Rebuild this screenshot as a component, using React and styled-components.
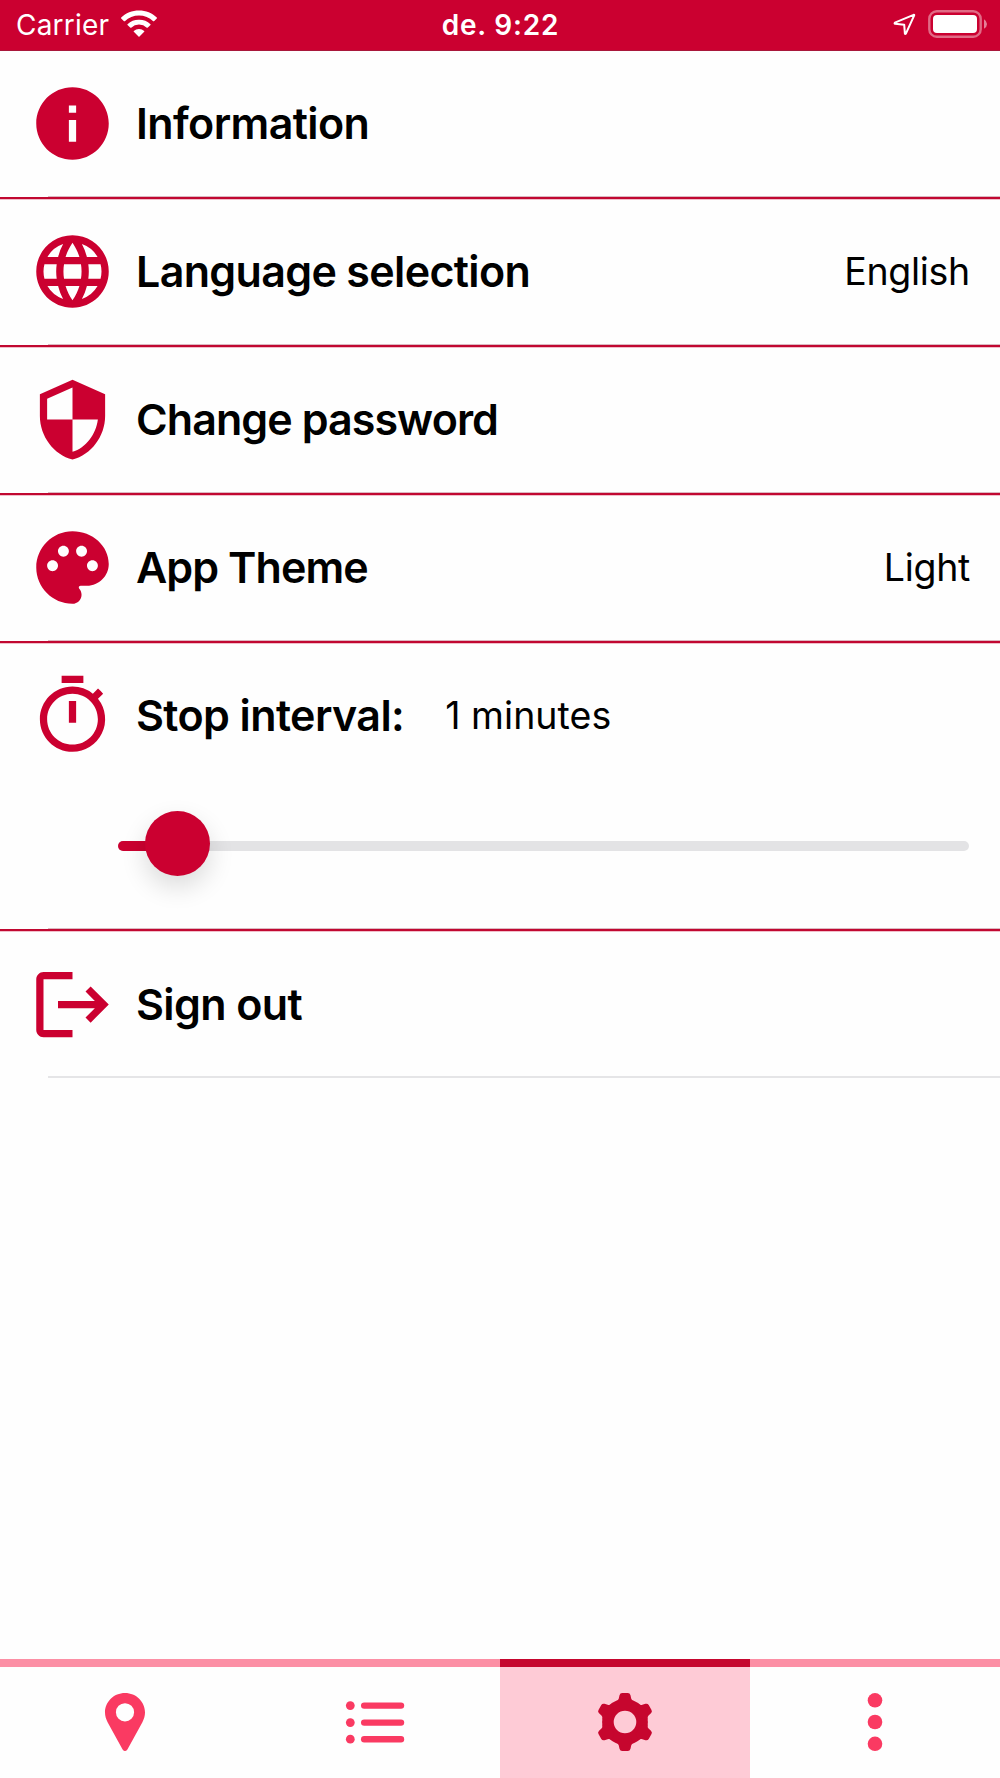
import styled, { createGlobalStyle } from "styled-components";
import { MdInfo, MdLanguage, MdSecurity } from "react-icons/md";

const RED = "#cb0030";

const GlobalStyle = createGlobalStyle`
  * {
    box-sizing: border-box;
  }

  body {
    margin: 0;
    background: #fefefe;
    color: #000;
    font-family: Inter, "Liberation Sans", sans-serif;
  }
`;

const Screen = styled.div`
  display: flex;
  flex-direction: column;
  height: 1778px;
`;

const StatusBar = styled.header`
  display: grid;
  grid-template-columns: 1fr auto 1fr;
  align-items: center;
  height: 51px;
  padding: 0 12px 2px 16px;
  background: ${RED};
  border-bottom: 1px solid #a8173b;
  color: #fff;
  font-size: 28px;
`;

const StatusGroup = styled.div`
  display: flex;
  align-items: center;
  justify-content: ${({ $end }) => ($end ? "flex-end" : "flex-start")};
  gap: 12px;
`;

const Carrier = styled.span`
  padding-top: 2px;
  letter-spacing: 0.2px;
`;

const Clock = styled.span`
  padding: 2px 3px 0 0;
  font-weight: 600;
  letter-spacing: 0.8px;
`;

const List = styled.ul`
  flex: 1;
  margin: 0;
  padding: 0;
  list-style: none;
`;

const Item = styled.li`
  position: relative;
  height: ${({ $height }) => $height}px;
  border-bottom: ${({ $last }) => ($last ? "none" : "2px solid #c10831")};
  box-shadow: ${({ $last }) =>
    $last ? "none" : "0 1px 0 rgba(203, 0, 48, 0.25)"};

  /* native inset separator */
  &::after {
    content: "";
    position: absolute;
    right: 0;
    bottom: 0;
    left: 48px;
    height: ${({ $last }) => ($last ? 2 : 1)}px;
    background: ${({ $last }) => ($last ? "#e5e5e7" : "#dcb9c1")};
  }
`;

const Row = styled.div`
  display: flex;
  align-items: center;
  height: ${({ $height }) => $height ?? 146}px;
  padding: 0 30px 2px 29px;

  > svg {
    flex: none;
    width: 87px;
    height: 87px;
    margin-right: 20px;
    color: ${RED};
    fill: ${RED};
  }
`;

const Label = styled.span`
  font-size: 43px;
  font-weight: 600;
  letter-spacing: ${({ $spacing }) => $spacing ?? -0.6}px;
  white-space: nowrap;
`;

const Value = styled.span`
  margin-top: 1px;
  margin-left: ${({ $inline }) => ($inline ? "41px" : "auto")};
  font-size: 37.5px;
  letter-spacing: ${({ $inline }) => ($inline ? 0.05 : -0.3)}px;
  white-space: nowrap;
`;

const Slider = styled.div`
  display: flex;
  align-items: center;
  height: 10px;
  margin: 52px 31px 0 118px;
  border-radius: 5px;
  background: #e3e3e5;
`;

const Fill = styled.div`
  width: 60px;
  height: 10px;
  border-radius: 5px 0 0 5px;
  background: ${RED};
`;

const Thumb = styled.div`
  width: 65px;
  height: 65px;
  margin: -5px 0 0 -33px;
  border-radius: 50%;
  background: ${RED};
  box-shadow: 0 11px 26px rgba(0, 0, 0, 0.14);
`;

const TabBar = styled.nav`
  display: grid;
  grid-template-columns: repeat(4, 1fr);
  height: 119px;
`;

const Tab = styled.div`
  display: flex;
  align-items: center;
  justify-content: center;
  padding-bottom: 1px;
  border-top: 8px solid ${({ $active }) => ($active ? "#c6062e" : "#fc8fa5")};
  background: ${({ $active }) => ($active ? "#fecbd6" : "#fefefe")};
  color: ${({ $active }) => ($active ? "#c6062e" : "#fa3a62")};

  svg {
    width: 60px;
    height: 60px;
    fill: currentColor;
  }
`;

const WifiIcon = () => (
  <svg width="36" height="28" viewBox="0 0 36 28" fill="#fff">
    <path d="M18 0.5C24.9 0.5 31.2 3.1 35.8 7.6Q36.1 8 35.8 8.4L33 11.2Q32.6 11.5 32.2 11.2A20.4 20.4 0 0 0 3.8 11.2Q3.4 11.5 3 11.2L0.2 8.4Q-0.1 8 0.2 7.6C4.8 3.1 11.1 0.5 18 0.5Z" />
    <path d="M18 9.8A16.6 16.6 0 0 1 29.5 14.2Q29.8 14.6 29.5 14.9L26.6 17.7Q26.2 18 25.8 17.7A11.4 11.4 0 0 0 10.2 17.7Q9.8 18 9.4 17.7L6.5 14.9Q6.2 14.6 6.5 14.2A16.6 16.6 0 0 1 18 9.8Z" />
    <path d="M18 19A7.9 7.9 0 0 1 23.2 20.9Q23.6 21.3 23.2 21.7L18.5 26.4Q18 26.9 17.5 26.4L12.8 21.7Q12.4 21.3 12.8 20.9A7.9 7.9 0 0 1 18 19Z" />
  </svg>
);

const LocationIcon = () => (
  <svg width="23" height="23" viewBox="0 0 23 23" fill="none">
    <path
      d="M20.6 1.8L1.9 9.7Q1.2 10.4 2 10.7L11.2 11.7L11.9 20.6Q12.2 21.4 12.9 20.6L21.2 2.3Q21.3 1.7 20.6 1.8Z"
      stroke="#fff"
      strokeWidth="2"
      strokeLinejoin="round"
    />
  </svg>
);

const BatteryIcon = () => (
  <svg width="60" height="28" viewBox="0 0 60 28">
    <rect
      x="1.3"
      y="1.3"
      width="51.4"
      height="25.4"
      rx="7.5"
      fill="none"
      stroke="#fff"
      strokeOpacity="0.42"
      strokeWidth="2.4"
    />
    <rect x="5" y="5" width="44" height="18" rx="4" fill="#fff" />
    <path d="M56 9.2Q59 11 59 14T56 18.8Z" fill="#fff" fillOpacity="0.5" />
  </svg>
);

const PaletteIcon = () => (
  <svg viewBox="0 0 24 24">
    <path d="M12 2C6.49 2 2 6.49 2 12s4.49 10 10 10c1.38 0 2.5-1.12 2.5-2.5 0-.61-.23-1.2-.64-1.67-.08-.1-.13-.21-.13-.33 0-.28.22-.5.5-.5H16c3.31 0 6-2.69 6-6 0-4.96-4.49-9-10-9zm5.5 11c-.83 0-1.5-.67-1.5-1.5s.67-1.5 1.5-1.5 1.5.67 1.5 1.5-.67 1.5-1.5 1.5zm-3-4c-.83 0-1.5-.67-1.5-1.5S13.67 6 14.5 6s1.5.67 1.5 1.5S15.33 9 14.5 9zM5 11.5c0-.83.67-1.5 1.5-1.5s1.5.67 1.5 1.5S7.33 13 6.5 13 5 12.33 5 11.5zm6-4c0 .83-.67 1.5-1.5 1.5S8 8.33 8 7.5 8.67 6 9.5 6s1.5.67 1.5 1.5z" />
  </svg>
);

const TimerIcon = () => (
  <svg viewBox="0 0 24 24">
    <path d="M15 1H9v2h6V1zm-4 13h2V8h-2v6zm8.03-6.61l1.42-1.42c-.43-.51-.9-.99-1.41-1.41l-1.42 1.42A8.962 8.962 0 0 0 12 4c-4.97 0-9 4.03-9 9s4.02 9 9 9a8.994 8.994 0 0 0 7.03-14.61zM12 20c-3.87 0-7-3.13-7-7s3.13-7 7-7 7 3.13 7 7-3.13 7-7 7z" />
  </svg>
);

const SignOutIcon = () => (
  <svg viewBox="0 0 24 24">
    <path d="M17 7l-1.41 1.41L18.17 11H8v2h10.17l-2.58 2.58L17 17l5-5zM4 5h8V3H4c-1.1 0-2 .9-2 2v14c0 1.1.9 2 2 2h8v-2H4V5z" />
  </svg>
);

const PinIcon = () => (
  <svg viewBox="0 0 60 60">
    <path
      fillRule="evenodd"
      d="M30 1C41.2 1 50 9.8 50 20.6C50 24.2 49 27.2 47.4 30.2L32.4 57.4Q30 60.6 27.6 57.4L12.6 30.2C11 27.2 10 24.2 10 20.6C10 9.8 18.8 1 30 1ZM30 11.2A9.1 9.1 0 1 0 30 29.4A9.1 9.1 0 1 0 30 11.2Z"
    />
  </svg>
);

const ListIcon = () => (
  <svg viewBox="0 0 60 60">
    {[13.6, 30.6, 47.2].map((y) => (
      <g key={y}>
        <circle cx="5.3" cy={y} r="4.4" />
        <rect x="16" y={y - 3.2} width="43.2" height="6.4" rx="3.2" />
      </g>
    ))}
  </svg>
);

const GearIcon = () => (
  <svg viewBox="0 0 60 60">
    <circle
      cx="30"
      cy="30"
      r="17.1"
      fill="none"
      stroke="currentColor"
      strokeWidth="11.6"
    />
    {[0, 60, 120, 180, 240, 300].map((angle) => (
      <path
        key={angle}
        transform={`rotate(${angle} 30 30)`}
        d="M21 9.2Q23.3 8.5 23.8 6.4L24.5 3.2Q25.1 1 27.2 1H32.8Q34.9 1 35.5 3.2L36.2 6.4Q36.7 8.5 39 9.2L35 15H25Z"
      />
    ))}
  </svg>
);

const MoreIcon = () => (
  <svg viewBox="0 0 60 60">
    {[8.3, 30, 51.8].map((y) => (
      <circle key={y} cx="30" cy={y} r="7.3" />
    ))}
  </svg>
);

const tabs = [
  { name: "map", Icon: PinIcon },
  { name: "list", Icon: ListIcon },
  { name: "settings", Icon: GearIcon, active: true },
  { name: "more", Icon: MoreIcon },
];

export default function App() {
  return (
    <>
      <GlobalStyle />
      <Screen>
        <StatusBar>
          <StatusGroup>
            <Carrier>Carrier</Carrier>
            <WifiIcon />
          </StatusGroup>
          <Clock>de. 9:22</Clock>
          <StatusGroup $end>
            <LocationIcon />
            <BatteryIcon />
          </StatusGroup>
        </StatusBar>
        <List>
          <Item $height={148}>
            <Row>
              <MdInfo />
              <Label>Information</Label>
            </Row>
          </Item>
          <Item $height={148}>
            <Row>
              <MdLanguage />
              <Label $spacing={-0.67}>Language selection</Label>
              <Value>English</Value>
            </Row>
          </Item>
          <Item $height={148}>
            <Row>
              <MdSecurity />
              <Label $spacing={-0.93}>Change password</Label>
            </Row>
          </Item>
          <Item $height={148}>
            <Row>
              <PaletteIcon />
              <Label $spacing={-0.93}>App Theme</Label>
              <Value>Light</Value>
            </Row>
          </Item>
          <Item $height={288}>
            <Row>
              <TimerIcon />
              <Label>Stop interval:</Label>
              <Value $inline>1 minutes</Value>
            </Row>
            <Slider>
              <Fill />
              <Thumb />
            </Slider>
          </Item>
          <Item $height={147} $last>
            <Row $height={148}>
              <SignOutIcon />
              <Label>Sign out</Label>
            </Row>
          </Item>
        </List>
        <TabBar>
          {tabs.map(({ name, Icon, active }) => (
            <Tab key={name} $active={active}>
              <Icon />
            </Tab>
          ))}
        </TabBar>
      </Screen>
    </>
  );
}
